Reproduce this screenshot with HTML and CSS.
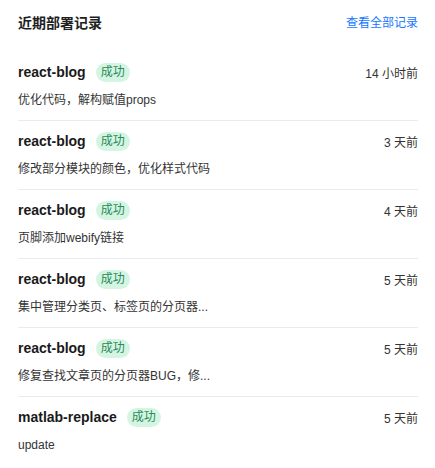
FILE: index.html
```html
<!DOCTYPE html>
<html lang="zh-CN">
<head>
<meta charset="utf-8">
<link rel="stylesheet" href="styles.css">
</head>
<body>
<div class="panel">
  <div class="header">
    <h2 class="title">近期部署记录</h2>
    <a class="more" href="#">查看全部记录</a>
  </div>
  <ul class="list">
    <li class="row">
      <div class="top"><span class="name">react-blog</span><span class="badge">成功</span><span class="time">14 小时前</span></div>
      <div class="desc">优化代码，解构赋值props</div>
    </li>
    <li class="row">
      <div class="top"><span class="name">react-blog</span><span class="badge">成功</span><span class="time">3 天前</span></div>
      <div class="desc">修改部分模块的颜色，优化样式代码</div>
    </li>
    <li class="row">
      <div class="top"><span class="name">react-blog</span><span class="badge">成功</span><span class="time">4 天前</span></div>
      <div class="desc">页脚添加webify链接</div>
    </li>
    <li class="row">
      <div class="top"><span class="name">react-blog</span><span class="badge">成功</span><span class="time">5 天前</span></div>
      <div class="desc">集中管理分类页、标签页的分页器...</div>
    </li>
    <li class="row">
      <div class="top"><span class="name">react-blog</span><span class="badge">成功</span><span class="time">5 天前</span></div>
      <div class="desc">修复查找文章页的分页器BUG，修...</div>
    </li>
    <li class="row">
      <div class="top"><span class="name">matlab-replace</span><span class="badge">成功</span><span class="time">5 天前</span></div>
      <div class="desc">update</div>
    </li>
  </ul>
</div>
</body>
</html>
```
FILE: styles.css
```css
* { box-sizing: border-box; }
html, body { margin: 0; padding: 0; background: #fff; }
body {
  font-family: "Liberation Sans", "Noto Sans CJK SC", sans-serif;
  color: #333;
}
.panel { padding: 0 17px 0 18px; }
.header {
  display: flex;
  justify-content: space-between;
  align-items: flex-start;
  padding-top: 14px;
  height: 52px;
}
.title {
  margin: 0;
  font-size: 14px;
  line-height: 18px;
  font-weight: bold;
  color: #1f1f1f;
}
.more {
  font-size: 12px;
  line-height: 18px;
  color: #1677ff;
  text-decoration: none;
}
.list { list-style: none; margin: 0; padding: 0; }
.row {
  padding: 10px 0 10px;
  border-bottom: 1px solid #e9e9ef;
}
.row:last-child { border-bottom: none; }
.top {
  display: flex;
  align-items: center;
  height: 20px;
}
.name {
  font-size: 14px;
  font-weight: bold;
  color: #1a1a1a;
}
.badge {
  margin-left: 10px;
  height: 19px;
  line-height: 19px;
  padding: 0 5px;
  border-radius: 10px;
  background: #d5f5e3;
  color: #2a8a5a;
  font-size: 12px;
}
.time {
  margin-left: auto;
  font-size: 12px;
  color: #333;
}
.desc {
  margin-top: 8px;
  font-size: 12px;
  line-height: 20px;
  color: #333;
}
```
